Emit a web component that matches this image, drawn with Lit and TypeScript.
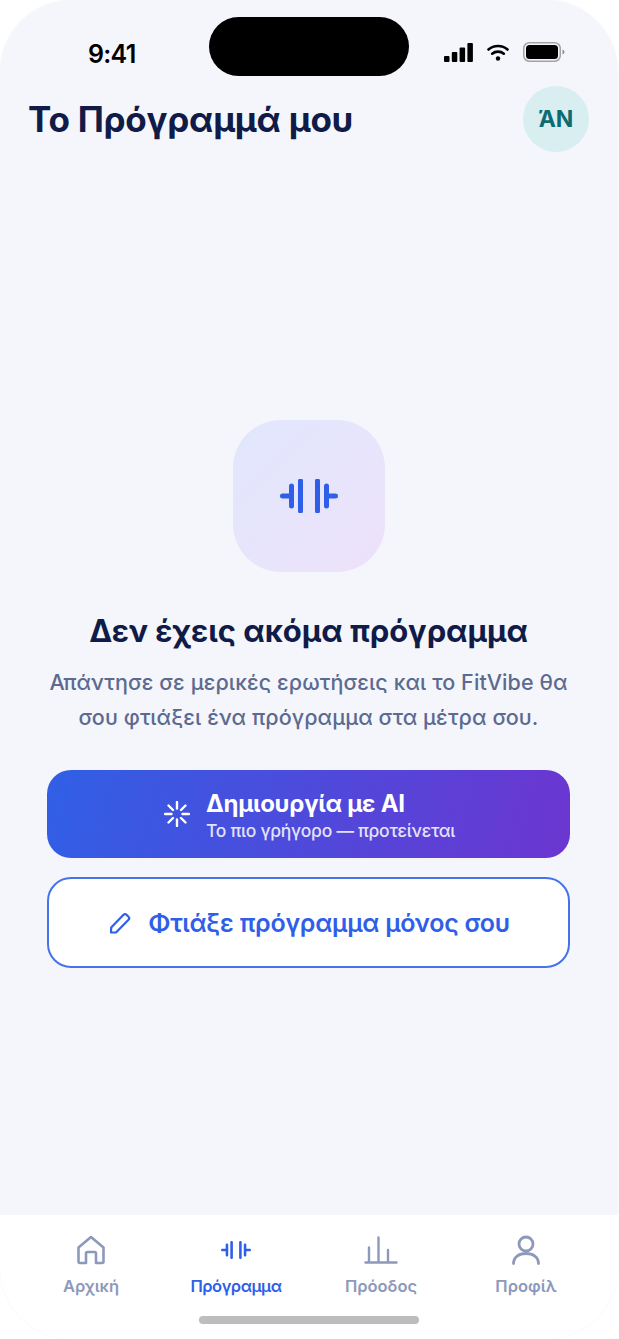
import { LitElement, html, css, svg } from "lit";
import { customElement } from "lit/decorators.js";

// dumbbell glyph is used twice: big in the empty state, small in the nav
const dumbbell = (w: number, h: number, sw: number) => html`
  <svg width=${w} height=${h} viewBox="0 0 58 34" fill="none" stroke="currentColor" stroke-width=${sw} stroke-linecap="round">
    <path d="M2.5 17H11.5M11.5 7V27M20.5 2V32M37.5 2V32M46.5 7V27M46.5 17H55.5" />
  </svg>
`;

const sparkle = svg`
  <path d="M13 1V7.5M13 18.5V25M1 13H7.5M18.5 13H25M4.5 4.5L9 9M17 17L21.5 21.5M21.5 4.5L17 9M9 17L4.5 21.5" />
`;

const tabs = [
  {
    label: "Αρχική",
    icon: html`<svg width="30" height="30" viewBox="0 0 30 30" fill="none" stroke="currentColor" stroke-width="2.6" stroke-linejoin="round" stroke-linecap="round">
      <path d="M2.5 12.5L15 2L27.5 12.5V26.5C27.5 27.6 27 28 26 28H20V18.5C20 17.5 19.5 17 18.5 17H11.5C10.5 17 10 17.5 10 18.5V28H4C3 28 2.5 27.6 2.5 26.5Z" />
    </svg>`,
  },
  { label: "Πρόγραμμα", active: true, icon: dumbbell(30, 18, 5) },
  {
    label: "Πρόοδος",
    icon: html`<svg width="34" height="28" viewBox="0 0 34 28" fill="none" stroke="currentColor" stroke-width="2.4" stroke-linecap="round">
      <path d="M1.5 26.5H32.5M5 26.5V11.5M14.5 26.5V1.5M24 26.5V14" />
    </svg>`,
  },
  {
    label: "Προφίλ",
    icon: html`<svg width="30" height="30" viewBox="0 0 30 30" fill="none" stroke="currentColor" stroke-width="2.8" stroke-linecap="round">
      <circle cx="15" cy="9" r="7" />
      <path d="M2.5 28.5C2.5 22 8 18.5 15 18.5C22 18.5 27.5 22 27.5 28.5" />
    </svg>`,
  },
];

@customElement("app-root")
export class AppRoot extends LitElement {
  static styles = css`
    :host {
      display: block;
      width: 619px;
      height: 1339px;
      background: #fff;
      font-family: Inter, "Noto Sans", sans-serif;
      overflow: hidden;
    }
    .screen {
      position: relative;
      width: 618px;
      height: 1339px;
      border-radius: 72px;
      background: #f4f6fb;
      overflow: hidden;
      display: flex;
      flex-direction: column;
      box-shadow: 0 0 0 1px #fafbfc;
    }
    .island {
      position: absolute;
      left: 209px;
      top: 17px;
      width: 200px;
      height: 59px;
      border-radius: 30px;
      background: #000;
    }
    .status {
      height: 86px;
      flex: none;
      display: flex;
      justify-content: space-between;
      padding: 38px 53px 0 88px;
      box-sizing: border-box;
    }
    .time {
      font-size: 25px;
      line-height: 32px;
      font-weight: 600;
      color: #000;
      letter-spacing: -0.7px;
    }
    .status-icons {
      display: flex;
      align-items: center;
      height: 20px;
      gap: 14px;
      margin-top: 4px;
    }
    .header {
      flex: none;
      height: 66px;
      display: flex;
      align-items: center;
      justify-content: space-between;
      padding: 0 29px 0 28px;
    }
    h1 {
      margin: 0;
      font-size: 35px;
      font-weight: 700;
      letter-spacing: -0.25px;
      color: #111b47;
    }
    .avatar {
      width: 66px;
      height: 66px;
      border-radius: 50%;
      background: #d9eef0;
      color: #0d6b73;
      font-size: 23px;
      font-weight: 700;
      display: flex;
      align-items: center;
      justify-content: center;
    }
    .main {
      flex: 1;
      display: flex;
      flex-direction: column;
      align-items: center;
      padding: 268px 48px 0 47px;
      box-sizing: border-box;
    }
    .tile {
      width: 152px;
      height: 152px;
      border-radius: 48px;
      background: linear-gradient(135deg, #e1e7fe, #ede2fa);
      color: #2f5fe8;
      display: flex;
      align-items: center;
      justify-content: center;
    }
    h2 {
      margin: 36px 0 0;
      font-size: 31px;
      line-height: 46px;
      font-weight: 700;
      letter-spacing: -0.06px;
      color: #111b47;
    }
    .lead {
      margin: 11px 0 0;
      width: 540px;
      text-align: center;
      font-size: 21.5px;
      line-height: 35px;
      font-weight: 500;
      letter-spacing: 0.1px;
      color: #5c6a8f;
    }
    .btn {
      width: 523px;
      box-sizing: border-box;
      display: flex;
      align-items: center;
      justify-content: center;
    }
    .primary {
      margin-top: 35px;
      height: 88px;
      gap: 16px;
      padding-left: 2px;
      border-radius: 24px;
      background: linear-gradient(105deg, #305fe6, #6c35d0);
      color: #fff;
    }
    .primary svg {
      stroke: #fff;
      stroke-width: 2.4;
      stroke-linecap: round;
      fill: none;
    }
    .primary-title {
      font-size: 24px;
      line-height: 30px;
      font-weight: 700;
      letter-spacing: -0.25px;
      margin-top: 2px;
    }
    .primary-sub {
      font-size: 17.5px;
      line-height: 23px;
      font-weight: 500;
      letter-spacing: -0.26px;
      color: #e3e3fb;
    }
    .secondary {
      margin-top: 19px;
      height: 91px;
      gap: 17px;
      padding-left: 2px;
      border-radius: 24px;
      border: 2px solid #4672ea;
      background: #fff;
      color: #2f5fe8;
      font-size: 25px;
      font-weight: 600;
      letter-spacing: -0.25px;
    }
    .nav {
      flex: none;
      position: relative;
      height: 124px;
      background: #fff;
      display: grid;
      grid-template-columns: repeat(4, 145px);
      padding: 20px 0 0 18.5px;
      box-sizing: border-box;
    }
    .tab {
      display: flex;
      flex-direction: column;
      align-items: center;
      color: #8d99bb;
      font-size: 16.5px;
      font-weight: 600;
    }
    .tab.active {
      color: #2f5fe8;
      letter-spacing: -0.5px;
    }
    .tab-icon {
      height: 30px;
      display: flex;
      align-items: center;
      justify-content: center;
    }
    .tab-label {
      margin-top: 10px;
      line-height: 22px;
    }
    .home-bar {
      position: absolute;
      left: 199px;
      top: 101px;
      width: 220px;
      height: 8px;
      border-radius: 4px;
      background: #bdbdbd;
    }
  `;

  render() {
    return html`
      <div class="screen">
        <div class="island"></div>
        <div class="status">
          <span class="time">9:41</span>
          <div class="status-icons">
            <svg width="29" height="19" viewBox="0 0 29 19" fill="#000">
              <rect x="0" y="13" width="5.5" height="6" rx="1" />
              <rect x="7.8" y="9" width="5.5" height="10" rx="1" />
              <rect x="15.6" y="4.5" width="5.5" height="14.5" rx="1" />
              <rect x="23.4" y="0" width="5.5" height="19" rx="1" />
            </svg>
            <svg width="22" height="17" viewBox="0 0 22 17" fill="none" stroke="#000" stroke-width="2.6" stroke-linecap="round">
              <path d="M1.5 5.5C6.7 0.8 15.3 0.8 20.5 5.5M5.2 9.7C8.4 6.9 13.6 6.9 16.8 9.7" />
              <circle cx="11" cy="14.5" r="2.2" fill="#000" stroke="none" />
            </svg>
            <svg width="42" height="20" viewBox="0 0 42 20" fill="none">
              <rect x="0.75" y="0.75" width="36.5" height="18.5" rx="5.5" stroke="#a3a3a3" stroke-width="1.5" />
              <rect x="3" y="3" width="32" height="14" rx="3.5" fill="#000" />
              <path d="M39.5 7.5C40.7 8 41.5 9 41.5 10S40.7 12 39.5 12.5Z" fill="#8f8f8f" />
            </svg>
          </div>
        </div>

        <div class="header">
          <h1>Το Πρόγραμμά μου</h1>
          <div class="avatar">ΆΝ</div>
        </div>

        <div class="main">
          <div class="tile">${dumbbell(58, 34, 5)}</div>
          <h2>Δεν έχεις ακόμα πρόγραμμα</h2>
          <p class="lead">Απάντησε σε μερικές ερωτήσεις και το FitVibe θα σου φτιάξει ένα πρόγραμμα στα μέτρα σου.</p>
          <div class="btn primary">
            <svg width="26" height="26" viewBox="0 0 26 26">${sparkle}</svg>
            <div>
              <div class="primary-title">Δημιουργία με AI</div>
              <div class="primary-sub">Το πιο γρήγορο — προτείνεται</div>
            </div>
          </div>
          <div class="btn secondary">
            <svg width="22" height="22" viewBox="0 0 22 22" fill="none" stroke="currentColor" stroke-width="2.2" stroke-linejoin="round">
              <path d="M2 20.5L2.2 15.5L14.5 2.8C15.4 1.9 16.6 1.9 17.5 2.8L19.5 4.8C20.4 5.7 20.4 6.9 19.5 7.8L7 20.5Z" />
            </svg>
            <span>Φτιάξε πρόγραμμα μόνος σου</span>
          </div>
        </div>

        <div class="nav">
          ${tabs.map(
            (t) => html`
              <div class="tab ${t.active ? "active" : ""}">
                <div class="tab-icon">${t.icon}</div>
                <div class="tab-label">${t.label}</div>
              </div>
            `
          )}
          <div class="home-bar"></div>
        </div>
      </div>
    `;
  }
}
